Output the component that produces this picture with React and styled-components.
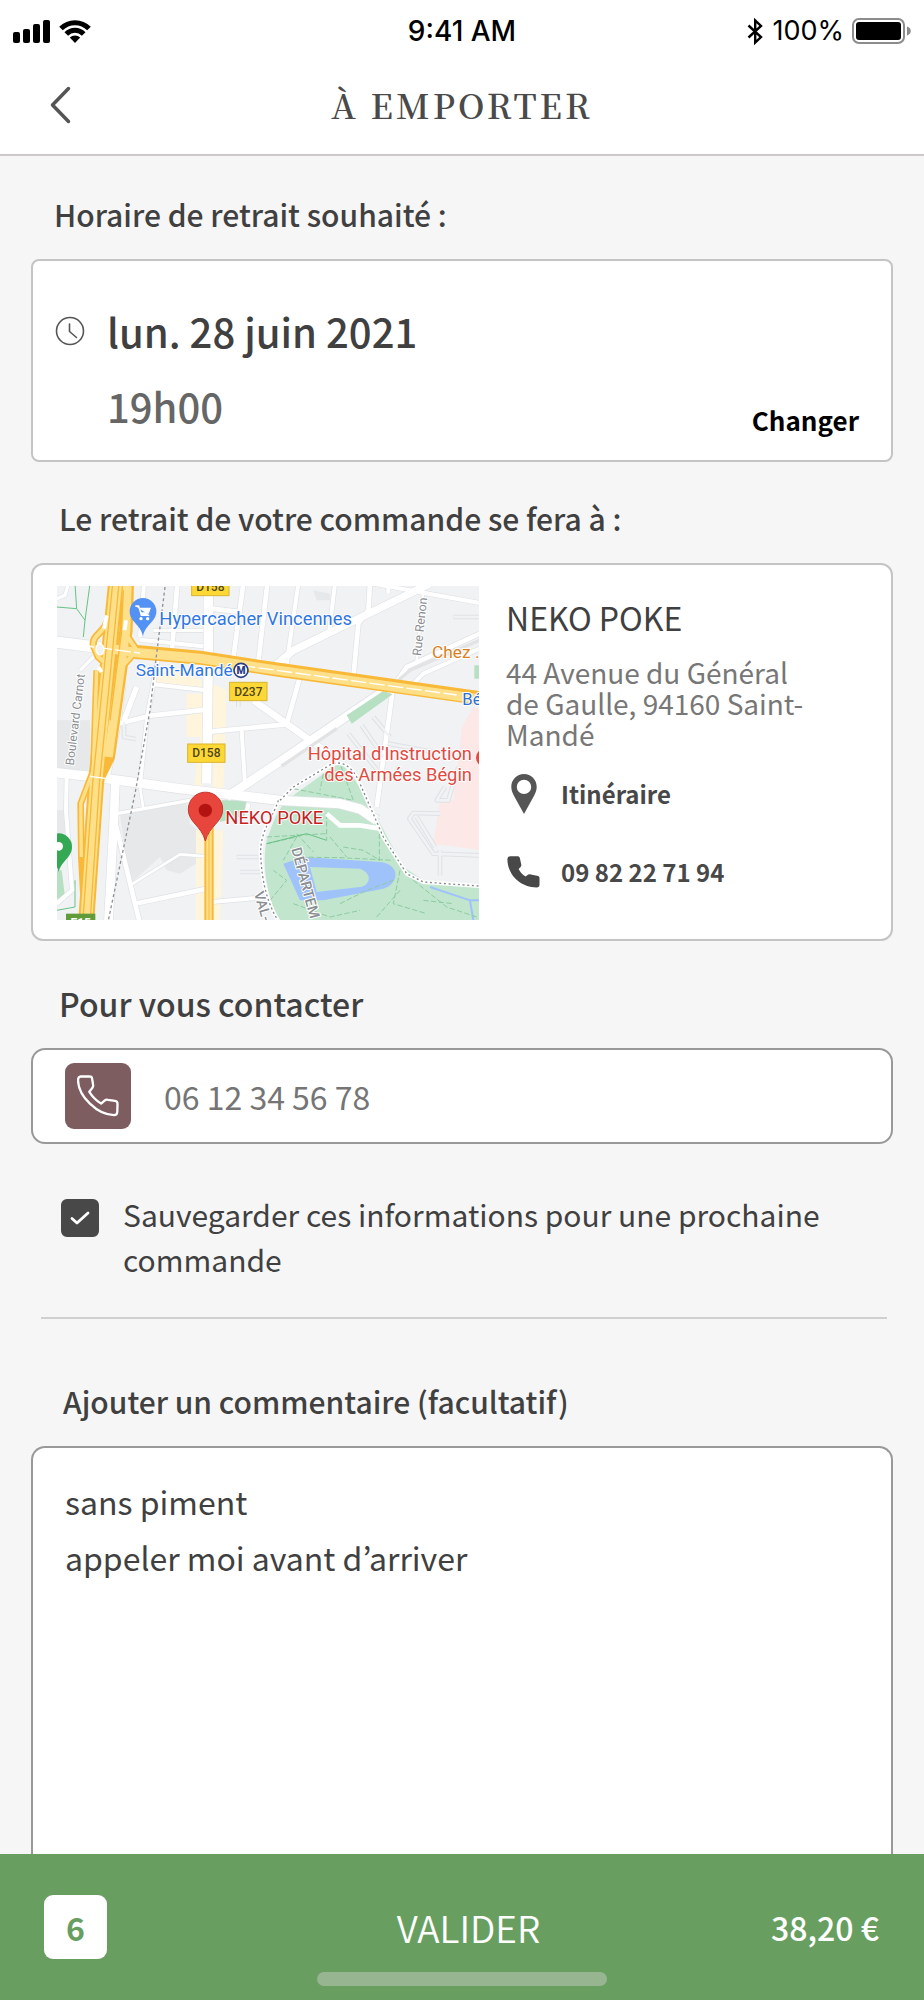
import React from 'react';
import styled, { createGlobalStyle } from 'styled-components';

const GlobalStyle = createGlobalStyle`
  *, *::before, *::after { box-sizing: border-box; }
  body {
    margin: 0;
    background: #f6f6f6;
    color: #404040;
    font-family: "Noto Sans CJK KR", "Noto Sans", sans-serif;
  }
  button, input, textarea { font: inherit; color: inherit; }
`;

const Screen = styled.div`
  min-height: 100vh;
  display: flex;
  flex-direction: column;
`;

/* ---------- header ---------- */

const StatusBar = styled.div`
  height: 60px;
  padding: 2px 13px 0;
  display: grid;
  grid-template-columns: 1fr auto 1fr;
  align-items: center;
  background: #fff;
  color: #000;
  font-family: Inter, sans-serif;
  font-size: 27px;
  line-height: 32px;
`;

const StatusGroup = styled.div`
  display: flex;
  align-items: center;
  gap: 8px;
  justify-content: ${({ $end }) => ($end ? 'flex-end' : 'flex-start')};
`;

const Clock = styled.span`
  font-size: 28px;
  font-weight: 500;
`;

const NavBar = styled.header`
  height: 96px;
  padding: 0 48px 4px;
  display: grid;
  grid-template-columns: 1fr auto 1fr;
  align-items: center;
  background: #fff;
  border-bottom: 2px solid #cdc8c8;
`;

const BackButton = styled.button`
  justify-self: start;
  display: flex;
  padding: 0;
  border: 0;
  background: none;
  cursor: pointer;
`;

const Title = styled.h1`
  margin: 0;
  font-family: "Noto Serif CJK SC", "Liberation Serif", serif;
  font-size: 34px;
  font-weight: 600;
  line-height: 48px;
  letter-spacing: 3px;
  color: #4a4a4a;
`;

/* ---------- content ---------- */

const Content = styled.main`
  flex: 1;
  display: flex;
  flex-direction: column;
  padding: 0 31px;
`;

const Section = styled.section`
  display: flex;
  flex-direction: column;
  flex: ${({ $grow }) => ($grow ? '1' : 'none')};
  padding-top: ${({ $top }) => $top}px;
`;

const sectionTitle = `
  display: block;
  margin: 0 0 25px;
  font-weight: 500;
  line-height: 40px;
`;

const SectionTitle = styled.h2`
  ${sectionTitle}
  padding-left: ${({ $indent }) => $indent}px;
  font-size: 30px;
`;

const FieldTitle = styled.label`
  ${sectionTitle}
  padding-left: ${({ $indent }) => $indent}px;
  font-size: ${({ $large }) => ($large ? 32 : 30)}px;
`;

const Card = styled.div`
  display: flex;
  background: #fff;
  border: 2px solid #c4c4c4;
  border-radius: 8px;
`;

const SlotCard = styled(Card)`
  padding: 33px 32px 16px 22px;
`;

const SlotIcon = styled.svg`
  flex: none;
  margin-top: 22px;
`;

const SlotText = styled.div`
  flex: 1;
  padding-left: 22px;
  font-size: 40px;
  font-weight: 500;
  line-height: 75px;
`;

const SlotTime = styled.div`
  color: #666;
`;

const ChangeButton = styled.button`
  align-self: flex-end;
  padding: 0;
  border: 0;
  background: none;
  color: #000;
  font-size: 26px;
  font-weight: 700;
  line-height: 48px;
  cursor: pointer;
`;

const PlaceCard = styled(Card)`
  padding: 21px 24px 19px;
  gap: 27px;
  border-radius: 12px;
`;

const MapPicture = styled.svg`
  flex: 0 1 422px;
  min-width: 0;
  height: 334px;
  font-family: Roboto, sans-serif;
`;

const PlaceDetails = styled.div`
  flex: 1;
  padding-top: 11px;
`;

const PlaceName = styled.h3`
  margin: 0 0 20px;
  font-size: 32px;
  font-weight: 400;
  line-height: 40px;
`;

const Address = styled.address`
  max-width: 310px;
  margin-bottom: 24px;
  font-style: normal;
  font-size: 28px;
  line-height: 31px;
  color: #777;
`;

const PlaceLinks = styled.nav`
  display: grid;
  row-gap: 38px;
`;

const PlaceLink = styled.a`
  display: grid;
  grid-template-columns: 36px 1fr;
  column-gap: 19px;
  align-items: center;
  font-size: 24px;
  font-weight: 700;
  line-height: 40px;
  color: #484848;
  text-decoration: none;

  svg { justify-self: center; }
`;

const PhoneField = styled(Card)`
  height: 96px;
  padding: 0 32px;
  gap: 33px;
  align-items: center;
  border-color: #999;
  border-radius: 14px;
`;

const PhoneBadge = styled.span`
  flex: none;
  width: 66px;
  height: 66px;
  display: grid;
  place-items: center;
  border-radius: 9px;
  background: #7e5d61;
`;

const PhoneInput = styled.input`
  flex: 1;
  min-width: 0;
  padding: 0;
  border: 0;
  outline: 0;
  background: none;
  font-size: 32px;
  line-height: 48px;

  &::placeholder { color: #757575; opacity: 1; }
`;

const SaveRow = styled.label`
  display: flex;
  gap: 24px;
  padding: 48px 30px 35px;
  font-size: 30px;
  line-height: 45px;
  cursor: pointer;
`;

const CheckWrap = styled.span`
  flex: none;
  display: grid;
  place-items: center;
  width: 38px;
  height: 38px;
  margin-top: 7px;

  & > * { grid-area: 1 / 1; }
  svg { pointer-events: none; visibility: hidden; }
  input:checked + svg { visibility: visible; }
`;

const Checkbox = styled.input`
  appearance: none;
  width: 100%;
  height: 100%;
  margin: 0;
  border: 2px solid #484848;
  border-radius: 6px;

  &:checked { background: #484848; }
`;

const Divider = styled.hr`
  height: 2px;
  margin: 0 6px 0 10px;
  border: 0;
  background: #d0d0d0;
`;

const CommentBox = styled.textarea`
  flex: 1;
  min-height: 260px;
  display: block;
  width: 100%;
  margin: 0;
  padding: 25px 32px;
  resize: none;
  outline: 0;
  background: #fff;
  border: 2px solid #999;
  border-bottom: 0;
  border-radius: 14px 14px 0 0;
  font-size: 32px;
  line-height: 56px;
`;

/* ---------- footer ---------- */

const Footer = styled.footer`
  position: sticky;
  bottom: 0;
  padding: 41px 45px 14px 44px;
  background: #689f61;
  color: #fff;
`;

const OrderBar = styled.div`
  display: grid;
  grid-template-columns: 1fr auto 1fr;
  align-items: center;
  font-size: 32px;
  font-weight: 500;
  line-height: 48px;
`;

const ItemCount = styled.span`
  width: 63px;
  height: 64px;
  display: grid;
  place-items: center;
  border-radius: 9px;
  background: #fff;
  color: #689f61;
  font-weight: 700;
`;

const SubmitButton = styled.button`
  padding: 0 0 0 14px;
  border: 0;
  background: none;
  font-size: 37px;
  font-weight: 350;
  cursor: pointer;
`;

const Total = styled.span`
  justify-self: end;
`;

const HomeIndicator = styled.div`
  width: 290px;
  height: 14px;
  margin: 13px auto 0;
  border-radius: 7px;
  background: #97b591;
`;

/* ---------- icons ---------- */

const SignalIcon = () => (
  <svg width="38" height="23" viewBox="0 0 38 23" aria-hidden="true">
    <rect x="0" y="12" width="7" height="11" rx="2" />
    <rect x="10" y="9" width="7" height="14" rx="2" />
    <rect x="20" y="4" width="7" height="19" rx="2" />
    <rect x="30" y="0" width="7" height="23" rx="2" />
  </svg>
);

const WifiIcon = () => (
  <svg width="32" height="23" viewBox="0 0 32 23" aria-hidden="true">
    <g fill="none" stroke="#000" strokeWidth="5">
      <path d="M2 8.6a19.5 19.5 0 0 1 28 0" />
      <path d="M7.3 14a12 12 0 0 1 17.4 0" />
    </g>
    <path d="M10.800 17.600a7.400 7.400 0 0 1 10.400 0L16 23z" />
  </svg>
);

const BluetoothIcon = () => (
  <svg width="17" height="27" viewBox="0 0 17 27" fill="none" stroke="#000" strokeWidth="2.400" aria-hidden="true">
    <path d="M1.500 7.500 14 19l-5.800 5.500V2.500L14 8 1.500 19.500" />
  </svg>
);

const BatteryIcon = () => (
  <svg width="59" height="26" viewBox="0 0 59 26" aria-hidden="true">
    <rect x="1" y="1" width="51" height="24" rx="6" fill="none" stroke="#8c8c8c" strokeWidth="2" />
    <rect x="4" y="4" width="45" height="18" rx="3" />
    <path d="M55 8.500c5 1.500 5 7.500 0 9z" fill="#8c8c8c" />
  </svg>
);

const BackIcon = () => (
  <svg width="24" height="40" viewBox="0 0 24 40" fill="none" stroke="#555" strokeWidth="3.500" strokeLinecap="round" strokeLinejoin="round" aria-hidden="true">
    <path d="M20.500 3.500 4.500 20 20.500 36.500" />
  </svg>
);

const ClockIcon = () => (
  <SlotIcon width="30" height="30" viewBox="0 0 30 30" fill="none" stroke="#555" strokeWidth="1.600" strokeLinecap="round" aria-hidden="true">
    <circle cx="15" cy="15" r="13.500" />
    <path d="M14.500 8v7.500l7 6" />
  </SlotIcon>
);

const PinIcon = () => (
  <svg width="26" height="40" viewBox="0 0 26 40" aria-hidden="true">
    <path fillRule="evenodd" fill="#555" d="M13 0C5.800 0 .3 5.700.3 12.800c0 3 1 5.800 2.500 8.600L13 40l10.200-18.600c1.500-2.800 2.500-5.600 2.500-8.600C25.700 5.700 20.200 0 13 0zm0 5.700a7.200 7.200 0 1 1 0 14.400 7.200 7.200 0 0 1 0-14.400z" />
  </svg>
);

const HandsetIcon = () => (
  <svg width="34" height="32" viewBox="0 0 34 32" aria-hidden="true">
    <path fill="#484848" d="M3.500.3h6.800c1.500 0 2.200.6 2.600 2l1.200 5.400c.4 1.700.2 2.700-1 3.900l-1.500 1.500c1.700 3.400 3.700 5.700 7 7.400l1.600-1.200c1.200-1 2-1.200 3.600-.9l6.200 1.300c1.800.4 2.500 1 2.500 2.700v6.300c0 1.800-1 2.800-2.900 2.800C14 31.500.7 19.500.4 3.500.4 1.500 1.500.3 3.500.3z" />
  </svg>
);

const HandsetOutlineIcon = () => (
  <svg width="42" height="42" viewBox="0 0 42 42" fill="none" stroke="#fff" strokeWidth="2.300" strokeLinejoin="round" aria-hidden="true">
    <path d="M3.500 1.500 12.500 1.300c1.600 0 2.400.8 2.600 2.300l1 6.200c.3 1.600 0 2.300-1 3.500l-2.800 3.500c3.200 5 6.600 8.500 11.800 11.800l3.200-2.800c1.300-1.100 2.200-1.300 3.700-1l7 1.100c1.700.3 2.500 1.100 2.500 2.800l-.2 8c-.1 2.200-1.100 3.400-3.300 3.400C20.500 40 1.300 21.500 1 5c0-2.200.6-3.300 2.500-3.500z" />
  </svg>
);

const CheckIcon = () => (
  <svg width="20" height="14" viewBox="0 0 20 14" fill="none" stroke="#fff" strokeWidth="2.800" strokeLinecap="round" strokeLinejoin="round" aria-hidden="true">
    <path d="M2 7.500 7 12 18 2" />
  </svg>
);

/* ---------- map ---------- */

const roads = [
  ['M40 214 150 228 300 250', 34],
  ['M40 606 150 618 420 655 720 690 900 700 960 716 1010 750', 28],
  ['M505 40v220l-5 380', 28],
  ['M226 640 222 740 205 1060', 26],
  ['M250 340 235 460 205 610', 14],
  ['M222 740 285 1000 300 1060', 14],
  ['M300 650 310 715', 8],
  ['M230 730 450 690', 10],
  ['M312 40 300 200 M300 208 490 228', 12],
  ['M412 40 396 240', 14],
  ['M340 180h150', 10],
  ['M355 260 322 436 300 640', 12],
  ['M290 350 252 450', 16],
  ['M235 460 330 436 500 418', 14],
  ['M340 342 500 360', 12],
  ['M515 115 600 125', 14],
  ['M610 40 580 262', 14],
  ['M682 40 655 275', 14],
  ['M510 484 740 462 780 320', 14],
  ['M605 480 615 640', 12],
  ['M560 680 740 560 1050 350', 26],
  ['M640 390 860 545', 20],
  ['M700 290 760 240 1170 40', 22],
  ['M775 40 740 280', 12],
  ['M885 40 868 180', 12],
  ['M990 40 985 120 955 160 940 320', 14],
  ['M1000 40 1330 100', 12],
  ['M1045 40v30', 12],
  ['M1150 60 1130 270', 8],
  ['M1060 350 1100 290 1330 185', 14],
  ['M1120 340 1150 310 1330 230', 12],
  ['M1058 360 1010 710', 14],
  ['M285 1000 500 955', 14],
  ['M270 945 420 852 500 858', 8],
  ['M515 995 660 982', 12],
  ['M80 620 78 720 96 960 50 1000', 12],
  ['M120 300 160 260', 10],
  ['M50 85 75 75 85 40', 10],
  ['M625 700 620 730', 12],
];

const lanes = [
  'M590 860h65M600 905h70',
  'M252 455v45l35 6',
  'M595 370v40',
  'M925 490 1020 610M965 465 1030 560M1000 440 1050 500',
  'M1045 520 1180 545M1000 740h20',
  'M1240 140h90',
  'M1255 590 1225 690 1190 690 1215 650',
  'M1200 730 1120 728 1108 745 1180 850 1320 855M1130 740 1185 830M1200 840v75',
];

const greenPaths = 'M760 655 940 690 900 580M850 610 840 660M740 690 860 700M680 820 770 800 730 870M770 790 820 845M680 800 860 790M860 730v80M870 800 920 860M760 860 900 862 1060 870M910 830 970 840 1020 870M1018 790v80M690 990 740 930 700 900M760 1000 870 1040 960 1020M900 1000 980 960 1060 930M1010 1040 1080 960M1080 900 1060 1000 1160 1030M1120 930 1220 1010 1310 1040M1150 990 1240 1000';

const parkEdge = 'M715 690C700 740 660 780 662 850 665 930 680 1000 720 1060M720 690 760 650 860 590C900 560 940 590 960 640L1030 800 1100 910 1150 935 1330 948';

const Shield = ({ x, y, label }) => (
  <g>
    <rect x={x} y={y} width="112" height="55" fill="#fdd835" stroke="#d9b430" strokeWidth="3" />
    <text x={x + 56} y={y + 40} textAnchor="middle" fontSize="36" fontWeight="500" fill="#4d4620">{label}</text>
  </g>
);

const Halo = (props) => (
  <text stroke="#fff" strokeWidth="6" strokeLinejoin="round" paintOrder="stroke" fontSize="55" {...props} />
);

const StoreMap = () => (
  <MapPicture viewBox="51 47 1266 1002" preserveAspectRatio="xMidYMid slice" role="img" aria-label="Plan du quartier de NEKO POKE">
    <rect x="40" y="40" width="1300" height="1030" fill="#f0f2f4" />
    <path d="M240 735 440 690 450 760 500 800V860L420 910 380 900 360 860 270 940z" fill="#e6e8ea" />
    <path d="M51 450H150V600H51zM51 720H80V790H51zM820 60 870 70V90H830z" fill="#e6e8ea" />
    <path d="M350 290 485 330V350L345 340zM440 370H487L485 660 462 650 480 500 440 500zM518 340 560 360 550 660H520zM468 780H550L540 1050H468z" fill="#fef5dc" />
    <path d="M1266 470 1300 410 1330 420V840L1180 820 1200 690 1240 690z" fill="#fce8e6" />
    <path d="M545 690 620 690 615 735 540 755zM51 900H65L75 980 51 985z" fill="#b7dfc2" />
    <path d="M900 575 940 620 1010 740 1090 890 1150 930 1330 950V1060H720C680 980 665 880 680 810 700 760 710 710 760 675z" fill="#c1e6cd" />
    <path d="M730 880 790 860 1020 875C1080 880 1080 940 1030 955L850 990 780 990z" fill="#9fc2fb" />
    <path d="M810 890 960 895C1000 910 990 945 960 950L830 965z" fill="#c1e6cd" />
    <path d="M1170 950 1290 990 1330 990M1290 990 1300 1050" fill="none" stroke="#9fc2fb" strokeWidth="6" />
    <path d={greenPaths} fill="none" stroke="#8ccba0" strokeWidth="3" strokeDasharray="16 7" />
    <path d="M50 110 110 115 105 40M110 115 135 150 130 200M135 150 150 40M50 1020 105 1010V930M680 820 800 790 860 810" fill="none" stroke="#66c284" strokeWidth="3" />

    <g fill="none" stroke="#dfe2e5" strokeLinejoin="round">
      {roads.map(([d, w]) => <path key={d} d={d} strokeWidth={w + 4} />)}
      {lanes.map((d) => <path key={d} d={d} strokeWidth="14" />)}
    </g>
    <g fill="none" stroke="#fff" strokeLinejoin="round">
      {roads.map(([d, w]) => <path key={d} d={d} strokeWidth={w} />)}
    </g>
    <g fill="none" stroke="#f0f2f4" strokeLinejoin="round">
      {lanes.map((d) => <path key={d} d={d} strokeWidth="8" />)}
    </g>
    <path d="M725 587 890 475M1075 330 1110 300 1330 205" fill="none" stroke="#e1e3e5" strokeWidth="10" />
    <path d="M920 435 1030 362 1058 372 935 460zM1303 285H1330V325H1303z" fill="#b7dfc2" />
    <path d="M860 730 900 765H960L1020 775" fill="none" stroke="#fff" strokeWidth="14" />

    <g fill="none" strokeLinejoin="round">
      <path d="M225 235 290 245 480 262 700 296 1330 385" stroke="#f9b938" strokeWidth="42" />
      <path d="M160 225C155 190 200 190 208 130L218 40M250 180 290 240 245 290 230 360" stroke="#f9b938" strokeWidth="22" />
      <path d="M160 225 175 260 210 290" stroke="#f9b938" strokeWidth="22" />
      <path d="M262 40 258 180 205 560 165 640" stroke="#f9b938" strokeWidth="40" />
      <path d="M170 300 160 600 122 700 124 860 135 1060" stroke="#f9b938" strokeWidth="20" />
      <path d="M228 40 200 320 168 640 138 1060" stroke="#f9b938" strokeWidth="48" />
      <path d="M507 770V1060" stroke="#f9b938" strokeWidth="28" />
      <path d="M225 237 290 247 480 264 700 298 1330 388" stroke="#fee08b" strokeWidth="28" />
      <path d="M160 225C155 190 200 190 208 130L218 40M250 180 290 240 245 290 230 360M160 225 175 260 210 290" stroke="#fee08b" strokeWidth="12" />
      <path d="M262 40 258 180 205 560" stroke="#fee08b" strokeWidth="26" />
      <path d="M170 300 160 600 122 700 124 860" stroke="#fee08b" strokeWidth="10" />
      <path d="M228 40 200 320 168 640 138 1060" stroke="#fee08b" strokeWidth="36" />
      <path d="M507 770V1060" stroke="#fee08b" strokeWidth="16" />
      <path d="M237 40 210 320 178 640 150 1060M218 40 190 320 158 640 128 1060M250 60 244 190 210 450" stroke="#f9b938" strokeWidth="4" />
      <path d="M507 770V1060" stroke="#f9b938" strokeWidth="3" />
      <path d="M60 217 300 248M150 618 420 655M600 285 1250 374" stroke="#fff" strokeWidth="4" strokeDasharray="46 10" />
      <path d="M192 175 200 135M258 150 254 180M175 290 185 305" stroke="#fff" strokeWidth="12" />
      <path d="M168 240C168 214 190 214 192 240 188 258 174 258 168 240z" fill="#f0f2f4" stroke="#fff" strokeWidth="4" />
    </g>

    <path d="M375 50 350 250 330 420 285 670 205 1050" fill="none" stroke="#8f9396" strokeWidth="4" strokeDasharray="9 8" />
    <path d={parkEdge} fill="none" stroke="#fff" strokeWidth="12" />
    <path d={parkEdge} fill="none" stroke="#85898c" strokeWidth="4" strokeDasharray="6 8" />

    <Shield x={455} y={21} label="D158" />
    <Shield x={443} y={521} label="D158" />
    <Shield x={569} y={336} label="D237" />
    <rect x="78" y="1030" width="88" height="50" fill="#619b3a" />
    <text x="122" y="1070" textAnchor="middle" fontSize="36" fontWeight="700" fill="#fff">E15</text>

    <Halo x="358" y="163" fill="#2f76e4">Hypercacher Vincennes</Halo>
    <Halo x="287" y="318" fontSize="52" fill="#2f76e4">Saint-Mandé</Halo>
    <circle cx="603" cy="300" r="21" fill="#fff" stroke="#2c3c86" strokeWidth="5" />
    <text x="603" y="311" textAnchor="middle" fontSize="31" fontWeight="900" fill="#2c3c86">M</text>
    <Halo x="1176" y="264" fontSize="52" fill="#d9811e">Chez .</Halo>
    <Halo x="1267" y="405" fontSize="50" fill="#2f6fd6">Bé</Halo>
    <Halo x="1296" y="569" textAnchor="end" fill="#e04a3f">Hôpital d'Instruction</Halo>
    <Halo x="1296" y="632" textAnchor="end" fill="#e04a3f">des Armées Bégin</Halo>
    <circle cx="1335" cy="562" r="27" fill="#e04a3f" />
    <Halo x="556" y="762" fill="#c5221f">NEKO POKE</Halo>
    <Halo fontSize="36" fill="#8a8e92" transform="translate(101 586) rotate(-83)">Boulevard Carnot</Halo>
    <Halo fontSize="37" fill="#8a8e92" transform="translate(1143 258) rotate(-84)">Rue Renon</Halo>
    <Halo fontSize="42" fontWeight="500" fill="#8a8e92" transform="translate(642 968) rotate(74)">VAL-</Halo>
    <Halo fontSize="43" fontWeight="500" fill="#8a8e92" transform="translate(754 836) rotate(75)">DÉPARTEM</Halo>

    <path d="M309 197C300 160 269 155 269 123a40 40 0 0 1 80 0C349 155 318 160 309 197z" fill="#5491f5" />
    <path d="M286 107h10l8 28h24M298 114h32l-5 14h-22z" fill="#fff" stroke="#fff" strokeWidth="4" />
    <circle cx="303" cy="145" r="5" fill="#fff" />
    <circle cx="323" cy="145" r="5" fill="#fff" />
    <path d="M496 812C484 765 445 757 445 717a51 51 0 0 1 103 0C548 757 508 765 496 812z" fill="#e8453c" stroke="#c5352d" strokeWidth="3" />
    <circle cx="496" cy="720" r="20" fill="#b31412" />
    <path d="M56 905C48 870 16 863 16 829a40 40 0 0 1 80 0C96 863 64 870 56 905z" fill="#34a853" />
    <circle cx="56" cy="828" r="13" fill="#fff" />
  </MapPicture>
);

/* ---------- page ---------- */

export default function App() {
  return (
    <Screen>
      <GlobalStyle />
      <StatusBar>
        <StatusGroup>
          <SignalIcon />
          <WifiIcon />
        </StatusGroup>
        <Clock>9:41 AM</Clock>
        <StatusGroup $end>
          <BluetoothIcon />
          <span>100%</span>
          <BatteryIcon />
        </StatusGroup>
      </StatusBar>
      <NavBar>
        <BackButton type="button" aria-label="Retour">
          <BackIcon />
        </BackButton>
        <Title>À EMPORTER</Title>
      </NavBar>

      <Content>
        <Section $top={38}>
          <SectionTitle $indent={23}>Horaire de retrait souhaité :</SectionTitle>
          <SlotCard>
            <ClockIcon />
            <SlotText>
              <div>lun. 28 juin 2021</div>
              <SlotTime>19h00</SlotTime>
            </SlotText>
            <ChangeButton type="button">Changer</ChangeButton>
          </SlotCard>
        </Section>

        <Section $top={36}>
          <SectionTitle $indent={28}>Le retrait de votre commande se fera à :</SectionTitle>
          <PlaceCard>
            <StoreMap />
            <PlaceDetails>
              <PlaceName>NEKO POKE</PlaceName>
              <Address>44 Avenue du Général de Gaulle, 94160 Saint-Mandé</Address>
              <PlaceLinks>
                <PlaceLink href="#itineraire">
                  <PinIcon />
                  Itinéraire
                </PlaceLink>
                <PlaceLink href="tel:0982227194">
                  <HandsetIcon />
                  09 82 22 71 94
                </PlaceLink>
              </PlaceLinks>
            </PlaceDetails>
          </PlaceCard>
        </Section>

        <Section $top={42}>
          <FieldTitle htmlFor="phone" $indent={28} $large>Pour vous contacter</FieldTitle>
          <PhoneField>
            <PhoneBadge>
              <HandsetOutlineIcon />
            </PhoneBadge>
            <PhoneInput id="phone" type="tel" placeholder="06 12 34 56 78" />
          </PhoneField>
          <SaveRow>
            <CheckWrap>
              <Checkbox type="checkbox" defaultChecked />
              <CheckIcon />
            </CheckWrap>
            <span>Sauvegarder ces informations pour une prochaine commande</span>
          </SaveRow>
          <Divider />
        </Section>

        <Section $top={62} $grow>
          <FieldTitle htmlFor="comment" $indent={32}>Ajouter un commentaire (facultatif)</FieldTitle>
          <CommentBox id="comment" defaultValue={'sans piment\nappeler moi avant d’arriver'} />
        </Section>
      </Content>

      <Footer>
        <OrderBar>
          <ItemCount>6</ItemCount>
          <SubmitButton type="submit">VALIDER</SubmitButton>
          <Total>38,20 €</Total>
        </OrderBar>
        <HomeIndicator />
      </Footer>
    </Screen>
  );
}
